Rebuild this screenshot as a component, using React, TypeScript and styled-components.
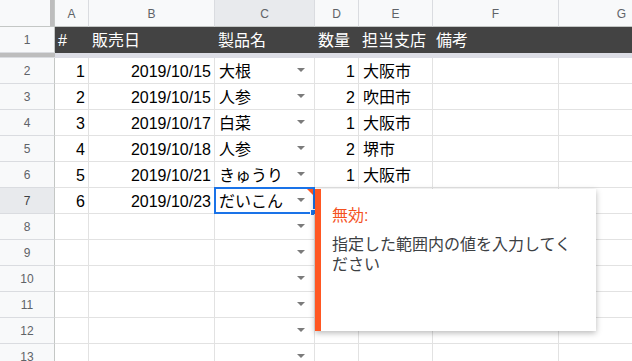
import * as React from "react";
import styled, { createGlobalStyle } from "styled-components";

const GlobalStyle = createGlobalStyle`
  html, body {
    margin: 0;
    padding: 0;
    background: #ffffff;
  }
  body {
    font-family: "Liberation Sans", "Noto Sans CJK JP", sans-serif;
  }
`;

const COLS = ["A", "B", "C", "D", "E", "F", "G"];
const GRID_LINE = "#e2e2e2";
const HEAD_LINE = "#c4c7c5";

const Viewport = styled.div`
  position: relative;
  width: 632px;
  height: 361px;
  overflow: hidden;
`;

const Sheet = styled.div`
  display: grid;
  grid-template-columns: 55px 34px 126px 100px 44px 74px 126px 126px;
  grid-template-rows: 27px 26px 5px;
  grid-auto-rows: 26px;
  width: 691px;
`;

const Corner = styled.div`
  box-sizing: border-box;
  background: #f8f9fa;
  border-right: 1px solid ${HEAD_LINE};
  border-bottom: 1px solid ${HEAD_LINE};
  box-shadow: inset -4px 0 0 #bdbdbd;
`;

const ColHeader = styled.div<{ $active?: boolean }>`
  box-sizing: border-box;
  display: flex;
  align-items: center;
  justify-content: center;
  background: ${(p) => (p.$active ? "#e8eaed" : "#f8f9fa")};
  border-right: 1px solid #dadce0;
  border-bottom: 1px solid ${HEAD_LINE};
  color: #5f6368;
  font-size: 12px;
  padding-top: 1px;
`;

const RowHeader = styled.div<{ $active?: boolean }>`
  box-sizing: border-box;
  display: flex;
  align-items: center;
  justify-content: center;
  background: ${(p) => (p.$active ? "#e8eaed" : "#f8f9fa")};
  border-right: 1px solid ${HEAD_LINE};
  border-bottom: 1px solid #dadce0;
  color: ${(p) => (p.$active ? "#3c4043" : "#5f6368")};
  font-size: 12px;
`;

const FrozenBarHead = styled.div`
  background: #bdbdbd;
  border-bottom: 1px solid #dadce0;
`;

const FrozenBar = styled.div`
  background: #dcdde5;
`;

const TitleCell = styled.div`
  box-sizing: border-box;
  display: flex;
  align-items: flex-end;
  background: #434343;
  color: #ffffff;
  font-size: 16px;
  line-height: 18px;
  padding: 0 3px 3px;
  white-space: nowrap;
  overflow: hidden;
`;

const Cell = styled.div<{ $align?: "left" | "right" }>`
  position: relative;
  box-sizing: border-box;
  display: flex;
  align-items: flex-end;
  justify-content: ${(p) => (p.$align === "right" ? "flex-end" : "space-between")};
  border-right: 1px solid ${GRID_LINE};
  border-bottom: 1px solid ${GRID_LINE};
  color: #000000;
  font-size: 16px;
  line-height: 18px;
  padding: 0 3px 2px 4px;
  white-space: nowrap;
`;

const DropArrow = styled.span`
  align-self: center;
  width: 0;
  height: 0;
  margin-right: 6px;
  border-left: 4px solid transparent;
  border-right: 4px solid transparent;
  border-top: 4px solid #7b7b7b;
`;

const Selection = styled.div`
  position: absolute;
  inset: -1px -1px -1px -1px;
  box-sizing: border-box;
  border: 2px solid #1a73e8;
  pointer-events: none;
`;

const FillHandle = styled.div`
  position: absolute;
  right: -4px;
  bottom: -4px;
  width: 5px;
  height: 5px;
  background: #1a73e8;
  border: 1px solid #ffffff;
`;

const InvalidMark = styled.div`
  position: absolute;
  top: 0;
  right: 0;
  width: 0;
  height: 0;
  border-top: 6px solid #ff5722;
  border-left: 6px solid transparent;
`;

const ErrorTip = styled.div`
  position: absolute;
  left: 315px;
  top: 189px;
  width: 281px;
  height: 142px;
  box-sizing: border-box;
  background: #ffffff;
  border-left: 6px solid #ff5722;
  box-shadow: 0 2px 6px rgba(0, 0, 0, 0.28);
  padding: 17px 20px 0 11px;
  font-family: "Liberation Sans", "Noto Sans CJK JP", sans-serif;
`;

const TipTitle = styled.div`
  color: #f4511e;
  font-size: 16px;
  line-height: 20px;
`;

const TipBody = styled.div`
  margin-top: 9px;
  color: #3c4043;
  font-size: 16px;
  line-height: 20px;
`;

type Row = [string, string, string, string, string];

const rows: Row[] = [
  ["1", "2019/10/15", "大根", "1", "大阪市"],
  ["2", "2019/10/15", "人参", "2", "吹田市"],
  ["3", "2019/10/17", "白菜", "1", "大阪市"],
  ["4", "2019/10/18", "人参", "2", "堺市"],
  ["5", "2019/10/21", "きゅうり", "1", "大阪市"],
  ["6", "2019/10/23", "だいこん", "", ""],
  ["", "", "", "", ""],
  ["", "", "", "", ""],
  ["", "", "", "", ""],
  ["", "", "", "", ""],
  ["", "", "", "", ""],
  ["", "", "", "", ""],
];

const titles = ["#", "販売日", "製品名", "数量", "担当支店", "備考", ""];

export default function App() {
  return (
    <>
      <GlobalStyle />
      <Viewport>
        <Sheet>
          <Corner />
          {COLS.map((c) => (
            <ColHeader key={c} $active={c === "C"}>
              {c}
            </ColHeader>
          ))}

          <RowHeader>1</RowHeader>
          {titles.map((t, i) => (
            <TitleCell key={i}>{t}</TitleCell>
          ))}

          <FrozenBarHead />
          {COLS.map((c) => (
            <FrozenBar key={c} />
          ))}

          {rows.map((r, i) => {
            const rowNo = i + 2;
            const selected = rowNo === 7;
            return (
              <React.Fragment key={rowNo}>
                <RowHeader $active={selected}>{rowNo}</RowHeader>
                <Cell $align="right">{r[0]}</Cell>
                <Cell $align="right">{r[1]}</Cell>
                <Cell>
                  <span>{r[2]}</span>
                  <DropArrow />
                  {selected && (
                    <Selection>
                      <InvalidMark />
                      <FillHandle />
                    </Selection>
                  )}
                </Cell>
                <Cell $align="right">{r[3]}</Cell>
                <Cell>{r[4]}</Cell>
                <Cell />
                <Cell />
              </React.Fragment>
            );
          })}
        </Sheet>

        <ErrorTip>
          <TipTitle>無効:</TipTitle>
          <TipBody>指定した範囲内の値を入力してください</TipBody>
        </ErrorTip>
      </Viewport>
    </>
  );
}
